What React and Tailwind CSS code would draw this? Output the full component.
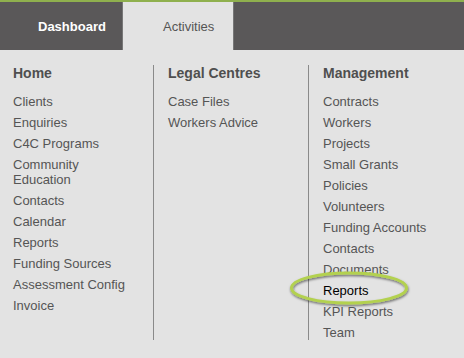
import React from "react";

const columns = [
  {
    title: "Home",
    items: ["Clients", "Enquiries", "C4C Programs", "Community Education", "Contacts", "Calendar", "Reports", "Funding Sources", "Assessment Config", "Invoice"],
  },
  {
    title: "Legal Centres",
    items: ["Case Files", "Workers Advice"],
  },
  {
    title: "Management",
    items: ["Contracts", "Workers", "Projects", "Small Grants", "Policies", "Volunteers", "Funding Accounts", "Contacts", "Documents", "Reports", "KPI Reports", "Team"],
    circled: "Reports",
  },
];

function Circle() {
  // hand drawn highlight round the Reports link
  return (
    <svg
      className="absolute left-[-33px] top-[-12px] w-[120px] h-[34px] pointer-events-none overflow-visible"
      viewBox="0 0 120 34"
    >
      <defs>
        <filter id="sh" x="-20%" y="-40%" width="140%" height="190%">
          <feDropShadow dx="0.5" dy="1.5" stdDeviation="1.2" floodColor="#000" floodOpacity="0.55" />
        </filter>
      </defs>
      <ellipse cx="59" cy="17" rx="57.5" ry="15" fill="none" stroke="#b3d150" strokeWidth="3" filter="url(#sh)" />
    </svg>
  );
}

export default function App() {
  return (
    <div className="w-[464px] h-[358px] bg-[#e3e3e3] font-['Liberation_Sans',Arial,sans-serif] overflow-hidden">
      {/* top nav */}
      <div className="h-[50px] bg-[#5a5859] border-t-2 border-[#8fb04e] flex text-[13px] leading-[16px]">
        <div className="w-[122px] pl-[38px] pt-px flex items-center font-bold text-white">Dashboard</div>
        <div className="w-[112px] pl-[40px] pt-px flex items-center bg-[#e3e3e3] text-[#555] border-x border-[#777]">Activities</div>
      </div>

      {/* menu columns */}
      <div className="flex pt-[15px] pb-[2px]">
        {columns.map((col, i) => (
          <div
            key={col.title}
            className={
              i === 0
                ? "w-[153px] pl-[13px]"
                : "w-[155px] pl-[14px] border-l border-[#8a8a8a]"
            }
          >
            <h2 className="text-[14px] leading-[16px] font-bold text-[#4f4f4f] mb-[13px]">{col.title}</h2>
            <ul className="flex flex-col gap-[6px] text-[13px] leading-[15px] text-[#555]">
              {col.items.map((item) => (
                <li key={item} className="relative w-[120px]">
                  {col.circled === item ? (
                    <>
                      <span className="text-black">{item}</span>
                      <Circle />
                    </>
                  ) : (
                    item
                  )}
                </li>
              ))}
            </ul>
          </div>
        ))}
      </div>
    </div>
  );
}
